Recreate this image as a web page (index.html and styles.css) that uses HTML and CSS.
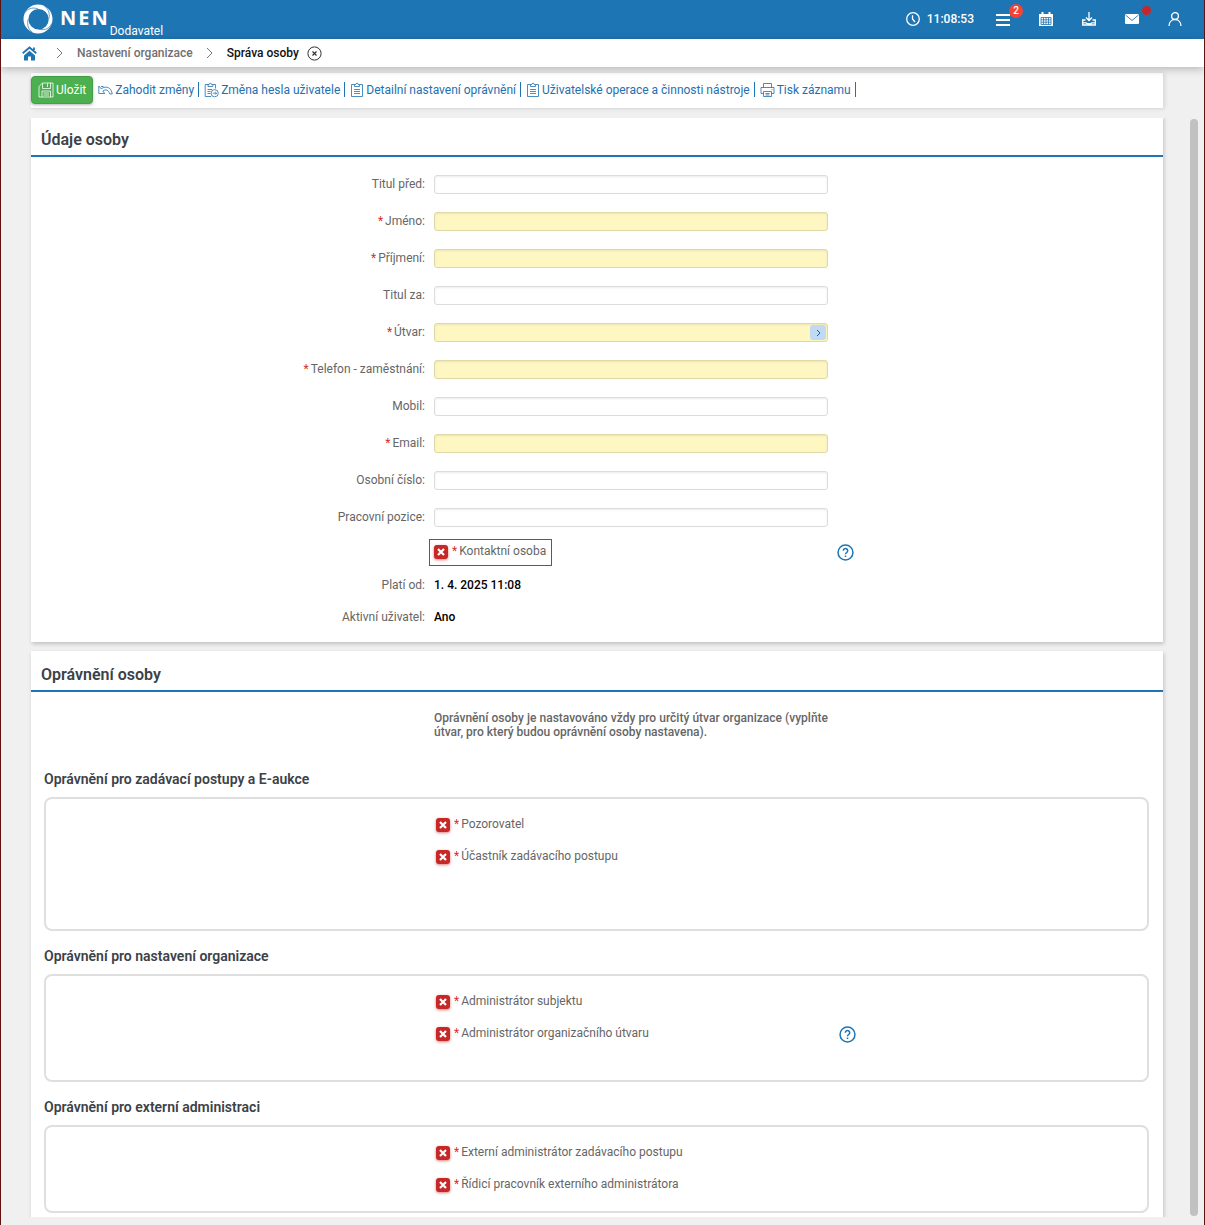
FILE: index.html
```html
<!DOCTYPE html>
<html lang="cs">
<head>
    <meta charset="UTF-8">
    <meta name="viewport" content="width=device-width, initial-scale=1.0">
    <title>NEN - Správa osoby</title>
    <link rel="stylesheet" href="styles.css">
</head>
<body>
    <!-- shared icon shapes -->
    <svg class="sprite" aria-hidden="true">
        <symbol id="clipboard" viewBox="0 0 14 16">
            <path d="M4.5 2.5h-3v12h11v-12h-3M4.5 4.5v-2h1.3a1.2 1.2 0 0 1 2.4 0h1.3v2zM4 7.5h6M4 9.5h6M4 11.5h6"/>
        </symbol>
        <symbol id="help" viewBox="0 0 18 18">
            <circle cx="9" cy="9" r="7.9"/>
            <path d="M6.7 7.2a2.300 2.300 0 1 1 3.6 1.800c-.9.6-1.300.9-1.300 1.800M9 12.200v1.600"/>
        </symbol>
        <symbol id="chevron" viewBox="0 0 7 12">
            <path d="M1 1l5 5-5 5"/>
        </symbol>
    </svg>

    <header class="topbar">
        <a href="#" class="brand">
            <svg class="logo" width="30" height="30" viewBox="0 0 30 30">
                <path fill="#fff" fill-rule="evenodd" d="M15 .5a14.500 14.500 0 1 1 0 29a14.500 14.500 0 1 1 0-29zM15.500 5a10.200 10.200 0 1 0 .1 20.400a10.200 10.200 0 0 0-.1-20.400z"/>
                <path d="M1.500 9C5 4.500 9 3 15 4.800M21 1.500c4.500 3.500 6 7.500 5 13M28.800 19.500c-3 5.500-7 7-13 5.700M9.500 28.700C5 25 4 21 5 15.500" fill="none" stroke="#1e75b4" stroke-width=".7"/>
            </svg>
            <span class="brand-name">NEN</span>
            <span class="brand-role">Dodavatel</span>
        </a>
        <nav class="top-icons">
            <span class="clock">
                <svg width="14" height="14" viewBox="0 0 14 14"><circle cx="7" cy="7" r="6.3"/><path d="M6.500 3.200V7l2.500 3"/></svg>
                11:08:53
            </span>
            <button class="icon-button" aria-label="Menu">
                <svg width="14" height="14" viewBox="0 0 14 14"><path d="M0 3h14M0 8h14M0 13h14" stroke-width="2"/></svg>
                <span class="badge">2</span>
            </button>
            <button class="icon-button" aria-label="Kalendář">
                <svg width="14" height="14" viewBox="0 0 14 14"><path d="M0 2h14v12H0zM2.500 0h2v3h-2zM9.500 0h2v3h-2z" fill="#fff" stroke="none"/><path d="M2 5.500h10v7H2zM2 7.800h10M2 10.200h10M4.500 5.500v7M7 5.500v7M9.500 5.500v7" stroke="#1e75b4" stroke-width=".8"/></svg>
            </button>
            <button class="icon-button" aria-label="Stažení">
                <svg width="14" height="14" viewBox="0 0 14 14"><path d="M7 0v8M4 5.500L7 8.500l3-3M3.500 8H.7v5h12.600V8h-2.800M1 10.800h3l1 .8h4l1-.8h3"/></svg>
            </button>
            <button class="icon-button" aria-label="Zprávy">
                <svg width="14" height="14" viewBox="0 0 14 14"><rect y="2" width="14" height="10" rx="1" fill="#fff" stroke="none"/><path d="M.5 3L7 8.500 13.500 3" stroke="#1e75b4" stroke-width=".9"/></svg>
                <span class="dot"></span>
            </button>
            <button class="icon-button" aria-label="Uživatel">
                <svg width="14" height="14" viewBox="0 0 14 14"><circle cx="7" cy="4" r="3.400"/><path d="M1 14c0-3.800 2.500-6.500 6-6.500s6 2.700 6 6.500"/></svg>
            </button>
        </nav>
    </header>

    <nav class="breadcrumb">
        <a href="#" aria-label="Domů">
            <svg class="home" width="15" height="15" viewBox="0 0 15 15"><path d="M7.500 4.800L2 9.500V14.500h4V10.500h3v4h4V9.500z" fill="#1e75b4"/><path d="M.7 7.200L7.500 1.500l6.800 5.700M12 1.500V4" fill="none" stroke="#1e75b4" stroke-width="1.800"/></svg>
        </a>
        <svg class="sep" width="7" height="12"><use href="#chevron"/></svg>
        <a href="#" class="crumb">Nastavení organizace</a>
        <svg class="sep" width="7" height="12"><use href="#chevron"/></svg>
        <span class="crumb current">Správa osoby</span>
        <button class="close" aria-label="Zavřít">
            <svg width="15" height="15" viewBox="0 0 15 15"><circle cx="7.500" cy="7.500" r="6.600"/><path d="M5.500 5.500l4 4M9.500 5.500l-4 4" stroke-width="1.200"/></svg>
        </button>
    </nav>

    <div class="toolbar">
        <button class="save">
            <svg width="16" height="16" viewBox="0 0 16 16"><path d="M4.500 1h10.500v14H1V4.500zM4.500 1v5.500h8V1M9.500 1.500v3.500M4 15V9h8.500v6M5.500 11h5.500M5.500 13h5.500"/></svg>
            Uložit
        </button>
        <button class="tool">
            <svg width="15" height="14" viewBox="0 0 15 14"><path d="M5.500 3.500h-2.500M.8 3v7.500h6L4.800 8C8 5.800 10.500 7 11.800 11h2.400C13.500 5 8.500 2 3.200 5.800z"/></svg>
            Zahodit změny
        </button>
        <button class="tool">
            <svg width="15" height="16" viewBox="0 0 15 16"><path d="M4 2.500H1.200v12h6M9 2.500h2.500v4M4 4.500v-2h1.200a1.200 1.200 0 0 1 2.400 0h1.200v2zM3.500 7.500h4.500M3.500 9.500h3M3.500 11.500h3"/><circle cx="10.700" cy="11.200" r="3.600"/><path d="M8.800 11.200h3.700M11.200 9.800l1.400 1.400-1.400 1.400"/></svg>
            Změna hesla uživatele
        </button>
        <button class="tool">
            <svg width="14" height="16"><use href="#clipboard"/></svg>
            Detailní nastavení oprávnění
        </button>
        <button class="tool">
            <svg width="14" height="16"><use href="#clipboard"/></svg>
            Uživatelské operace a činnosti nástroje
        </button>
        <button class="tool">
            <svg width="15" height="16" viewBox="0 0 15 16"><path d="M3.500 5.500v-4h8v4M3.500 11.500h-2.500v-6h13v6h-2.500M3.500 9.500h8v5h-8zM5.500 11.500h4M5.500 13h4M11.500 7.500h1"/></svg>
            Tisk záznamu
        </button>
    </div>

    <div class="content">
        <main class="panels">
            <section class="panel">
                <h2 class="panel-title">Údaje osoby</h2>
                <form class="fields">
                    <div class="row">
                        <label for="titul-pred">Titul před:</label>
                        <input type="text" id="titul-pred">
                    </div>
                    <div class="row required">
                        <label for="jmeno">Jméno:</label>
                        <input type="text" id="jmeno">
                    </div>
                    <div class="row required">
                        <label for="prijmeni">Příjmení:</label>
                        <input type="text" id="prijmeni">
                    </div>
                    <div class="row">
                        <label for="titul-za">Titul za:</label>
                        <input type="text" id="titul-za">
                    </div>
                    <div class="row required">
                        <label for="utvar">Útvar:</label>
                        <div class="picker">
                            <input type="text" id="utvar">
                            <button type="button" class="pick" aria-label="Vybrat útvar">
                                <svg width="5" height="8" viewBox="0 0 5 8"><path d="M1 1l3 3-3 3"/></svg>
                            </button>
                        </div>
                    </div>
                    <div class="row required">
                        <label for="telefon">Telefon - zaměstnání:</label>
                        <input type="text" id="telefon">
                    </div>
                    <div class="row">
                        <label for="mobil">Mobil:</label>
                        <input type="text" id="mobil">
                    </div>
                    <div class="row required">
                        <label for="email">Email:</label>
                        <input type="text" id="email">
                    </div>
                    <div class="row">
                        <label for="cislo">Osobní číslo:</label>
                        <input type="text" id="cislo">
                    </div>
                    <div class="row">
                        <label for="pozice">Pracovní pozice:</label>
                        <input type="text" id="pozice">
                    </div>
                    <div class="row check-row">
                        <label class="check highlighted"><input type="checkbox"><span>Kontaktní osoba</span></label>
                        <button type="button" class="help" aria-label="Nápověda"><svg width="17" height="17"><use href="#help"/></svg></button>
                    </div>
                    <div class="row value-row">
                        <span class="name">Platí od:</span>
                        <span class="value">1. 4. 2025 11:08</span>
                    </div>
                    <div class="row value-row">
                        <span class="name">Aktivní uživatel:</span>
                        <span class="value">Ano</span>
                    </div>
                </form>
            </section>

            <section class="panel">
                <h2 class="panel-title">Oprávnění osoby</h2>
                <div class="row note-row">
                    <p class="note">Oprávnění osoby je nastavováno vždy pro určitý útvar organizace (vyplňte útvar, pro který budou oprávnění osoby nastavena).</p>
                </div>
                <div class="groups">
                    <h3>Oprávnění pro zadávací postupy a E-aukce</h3>
                    <div class="group group-large">
                        <div class="row check-row">
                            <label class="check"><input type="checkbox"><span>Pozorovatel</span></label>
                        </div>
                        <div class="row check-row">
                            <label class="check"><input type="checkbox"><span>Účastník zadávacího postupu</span></label>
                        </div>
                    </div>
                    <h3>Oprávnění pro nastavení organizace</h3>
                    <div class="group group-medium">
                        <div class="row check-row">
                            <label class="check"><input type="checkbox"><span>Administrátor subjektu</span></label>
                        </div>
                        <div class="row check-row">
                            <label class="check"><input type="checkbox"><span>Administrátor organizačního útvaru</span></label>
                            <button type="button" class="help" aria-label="Nápověda"><svg width="17" height="17"><use href="#help"/></svg></button>
                        </div>
                    </div>
                    <h3>Oprávnění pro externí administraci</h3>
                    <div class="group">
                        <div class="row check-row">
                            <label class="check"><input type="checkbox"><span>Externí administrátor zadávacího postupu</span></label>
                        </div>
                        <div class="row check-row">
                            <label class="check"><input type="checkbox"><span>Řídicí pracovník externího administrátora</span></label>
                        </div>
                    </div>
                </div>
            </section>
        </main>
        <div class="scrollbar"></div>
    </div>
</body>
</html>
```
FILE: styles.css
```css
* {
    box-sizing: border-box;
}

body {
    margin: 0;
    min-height: 100vh;
    display: flex;
    flex-direction: column;
    border: solid #5f1212;
    border-width: 0 1px;
    background: #f0f0f0;
    color: #666;
    font-family: Roboto, "Liberation Sans", sans-serif;
    font-size: 12px;
    line-height: 14px;
}

button {
    display: flex;
    align-items: center;
    padding: 0;
    border: 0;
    background: none;
    color: inherit;
    font: inherit;
    cursor: pointer;
}

a {
    color: inherit;
    text-decoration: none;
}

svg {
    display: block;
    flex: none;
    fill: none;
    stroke: currentColor;
}

.sprite {
    position: absolute;
    width: 0;
    height: 0;
}

/* top bar */
.topbar {
    height: 39px;
    display: flex;
    justify-content: space-between;
    padding: 0 22px;
    background: #1e75b4;
    color: #fff;
}

.brand {
    display: flex;
    align-items: center;
    padding-bottom: 1px;
}

.logo {
    stroke: none;
}

.brand-name {
    margin-left: 7px;
    padding-bottom: 2px;
    font-family: "Noto Sans", sans-serif;
    font-size: 20px;
    font-weight: 700;
    letter-spacing: 2px;
    line-height: 24px;
}

.brand-role {
    align-self: flex-end;
}

.top-icons {
    display: flex;
    align-items: center;
    gap: 29px;
    padding-bottom: 2px;
}

.top-icons svg {
    stroke-width: 1.3px;
}

.clock {
    display: flex;
    align-items: center;
    gap: 7px;
    margin-right: -7px;
    font-weight: 500;
}

.icon-button {
    position: relative;
}

.badge,
.dot {
    position: absolute;
    border-radius: 50%;
}

.badge {
    left: 13px;
    top: -8px;
    width: 14px;
    height: 14px;
    background: #f44336;
    font-size: 10px;
    font-weight: 500;
    text-align: center;
}

.dot {
    left: 17px;
    top: -6px;
    width: 9px;
    height: 9px;
    background: #c62828;
}

/* breadcrumb */
.breadcrumb {
    position: relative;
    height: 28px;
    display: flex;
    align-items: center;
    padding: 0 21px;
    background: #fff;
    box-shadow: 0 2px 8px rgba(0, 0, 0, 0.25);
    font-weight: 500;
}

.home {
    margin-right: 6px;
    stroke: none;
}

.sep {
    margin: 0 14px 0 13px;
    color: #777;
}

.crumb {
    color: #707070;
}

.crumb.current {
    color: #111;
}

.close {
    margin-left: 8px;
    color: #333;
}

/* toolbar */
.toolbar {
    display: flex;
    align-items: center;
    min-height: 36px;
    margin: 6px 41px 9px 30px;
    padding-bottom: 2px;
    background: #fff;
    border-bottom: 1px solid #ddd;
    box-shadow: 2px 0 4px rgba(0, 0, 0, 0.1);
}

.toolbar svg {
    stroke-width: 0.8px;
}

.save {
    height: 28px;
    gap: 2px;
    padding: 0 6px;
    border-radius: 4px;
    border: 1px solid #43a047;
    background: #4caf50;
    box-shadow: 0 1px 3px rgba(0, 0, 0, 0.3);
    color: #fff;
}

.tool {
    height: 15px;
    gap: 2px;
    margin-left: 5px;
    padding-right: 4px;
    border-right: 1px solid #1e75b4;
    color: #1e70b0;
}

/* panels */
.content {
    flex: 1;
    display: flex;
    margin: 0 6px 8px 0;
    overflow: hidden;
}

.panels {
    flex: 1;
    padding: 0 27px 0 30px;
}

.panel {
    background: #fff;
    box-shadow: 1px 2px 4px rgba(0, 0, 0, 0.2);
}

.panel:first-child {
    margin: -2px 0 9px;
    padding-bottom: 9px;
}

.panel-title {
    margin: 0;
    padding: 15px 10px 6px;
    border-bottom: 2px solid #1e75b4;
    color: #3c4248;
    font-size: 16px;
    font-weight: 600;
    line-height: 18px;
}

.fields {
    padding-top: 14px;
}

.row {
    display: grid;
    grid-template-columns: 394fr 394fr 326fr;
    column-gap: 9px;
    align-items: center;
    min-height: 37px;
    padding-bottom: 10px;
}

.row > label:first-child {
    padding-bottom: 2px;
    text-align: right;
}

.name {
    text-align: right;
}

.required > label::before,
.check span::before {
    content: "*";
    margin-right: 2px;
    color: #d32f2f;
}

.row input[type="text"] {
    width: 100%;
    height: 19px;
    padding: 0 5px;
    border: 1px solid #dcdcdc;
    border-radius: 3px;
    box-shadow: inset 0 1px 2px rgba(0, 0, 0, 0.08);
    background: #fff;
    font: inherit;
}

.row.required input[type="text"] {
    background: #fff7c2;
    border-color: #dfd9a8;
}

.picker {
    position: relative;
}

.pick {
    position: absolute;
    right: 2px;
    top: 2px;
    width: 16px;
    height: 15px;
    justify-content: center;
    border-radius: 3px;
    background: #c2d9f3;
    color: #1e60a8;
}

.row.check-row,
.row.value-row {
    min-height: 32px;
    padding: 0;
}

.fields .check-row {
    margin: -5px 0 1px;
}

.row > .check:first-child {
    grid-column: 2;
    justify-self: start;
    display: flex;
    align-items: center;
    gap: 4px;
    padding-bottom: 0;
    text-align: left;
}

.check span {
    padding-bottom: 2px;
}

.check input {
    appearance: none;
    width: 14px;
    height: 14px;
    margin: 0;
    border-radius: 3px;
    background: #c62828 url("data:image/svg+xml,%3Csvg xmlns='http://www.w3.org/2000/svg' viewBox='0 0 14 14'%3E%3Cpath d='M4 4l6 6M10 4l-6 6' stroke='white' stroke-width='2.200'/%3E%3C/svg%3E");
    box-shadow: 0 1px 3px rgba(198, 40, 40, 0.6);
}

/* pull the frame out so the box inside keeps the column edge */
.row > .highlighted:first-child {
    height: 27px;
    margin-left: -5px;
    padding: 0 5px 0 4px;
    border: 1px solid #d9232e;
}

.help {
    color: #1e75b4;
}

.help svg {
    stroke-width: 1.6px;
}

.value {
    color: #000;
    font-weight: 500;
}

/* permissions */
.row.note-row {
    padding: 19px 0 32px;
}

.note {
    grid-column: 2;
    margin: 0;
    font-weight: 500;
    text-align: justify;
}

.groups {
    padding: 0 14px 4px 13px;
}

.groups h3 {
    margin: 0;
    height: 26px;
    color: #3c4248;
    font-size: 14px;
    font-weight: 600;
    line-height: 16px;
}

.group {
    padding: 10px 0;
    border: 2px solid #dfdfdf;
    border-radius: 8px;
}

.group + h3 {
    margin-top: 17px;
}

.group .row {
    grid-template-columns: 381fr 394fr 308fr;
}

.group-large {
    padding-bottom: 56px;
}

.group-medium {
    padding-bottom: 30px;
}

.scrollbar {
    width: 8px;
    margin: 1px 0;
    border-radius: 4px;
    background: #c1c1c1;
}
```
